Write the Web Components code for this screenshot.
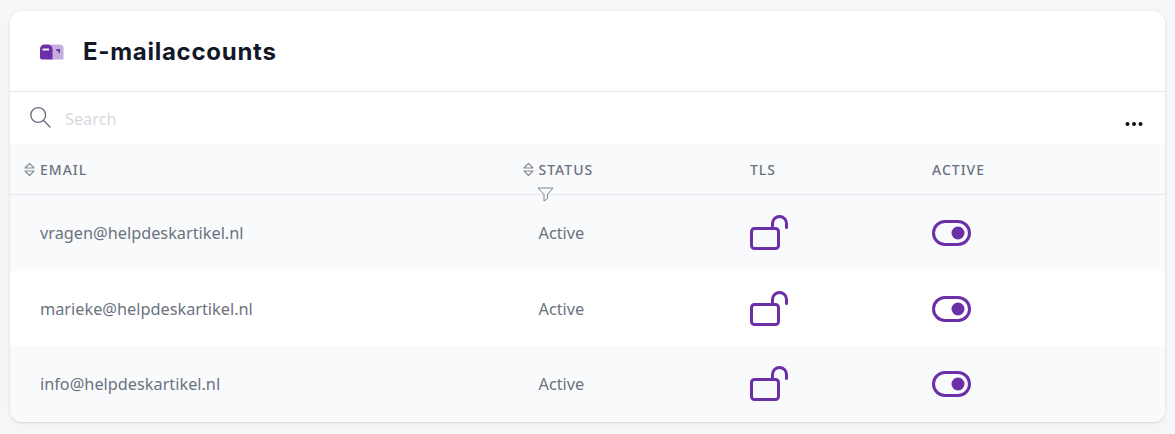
<!DOCTYPE html>
<html>
<head>
<meta charset="utf-8">
<title>E-mailaccounts</title>
<style>
    html, body { margin: 0; background: #f5f6f8; }
    body { padding: 11px 10px 12px; font-family: "Noto Sans", sans-serif; }
</style>
</head>
<body>
<account-card heading="E-mailaccounts">
    <account-head slot="head"></account-head>
    <account-row email="vragen@helpdeskartikel.nl" status="Active" shade style="height:76px"></account-row>
    <account-row email="marieke@helpdeskartikel.nl" status="Active" style="height:75px"></account-row>
    <account-row email="info@helpdeskartikel.nl" status="Active" shade style="height:76px"></account-row>
</account-card>

<script>
class AccountCard extends HTMLElement {
    constructor() {
        super();
        const shadowRoot = this.attachShadow({ mode: 'open' });
        shadowRoot.innerHTML = `
        <style>
            :host {
                display: block;
                background: #fff;
                border-radius: 12px;
                box-shadow: 0 1px 3px rgba(0,0,0,0.14);
                overflow: hidden;
            }
            #title {
                display: flex;
                align-items: center;
                gap: 19px;
                height: 80px;
                padding-left: 30px;
                border-bottom: 1px solid #e5e7eb;
            }
            #mailbox { margin-top: 1px; }
            h1 {
                margin: 2px 0 0;
                font: 700 24px/32px Inter, sans-serif;
                letter-spacing: 0.72px;
                color: #111827;
            }
            #search {
                display: flex;
                align-items: center;
                height: 52px;
                padding: 0 22px 0 19px;
                gap: 14px;
            }
            #search span {
                flex: 1;
                margin-top: 1px;
                font-size: 16.3px;
                color: #d6d9e0;
            }
            #dots { margin-top: 11px; }
            svg { display: block; }
        </style>
        <div id="title">
            <svg id="mailbox" width="24" height="16" viewBox="0 0 24 16">
                <path d="M11 0.5H19.5A4 4 0 0 1 23.5 4.5V15.5H11Z" fill="#c4aee0"/>
                <path d="M4.5 0.5H8A4.5 4.5 0 0 1 12.5 5V15.5H2A2 2 0 0 1 0 13.5V5A4.5 4.5 0 0 1 4.5 0.5Z" fill="#6b2fa8"/>
                <rect x="2.5" y="4.5" width="6.5" height="2" fill="#efe8f7"/>
                <path d="M16.5 5H20V9H18.5V7H16.5Z" fill="#6b2fa8"/>
            </svg>
            <h1></h1>
        </div>
        <div id="search">
            <svg width="22" height="22" viewBox="0 0 22 22" fill="none" stroke="#6b7280" stroke-width="1.4" stroke-linecap="round" style="overflow:visible">
                <circle cx="9.2" cy="8" r="7.4"/>
                <path d="M14.6 13.4L21 20"/>
            </svg>
            <span>Search</span>
            <svg id="dots" width="18" height="4" viewBox="0 0 18 4" fill="#111"><circle cx="2.5" cy="2" r="2"/><circle cx="9" cy="2" r="2"/><circle cx="15.5" cy="2" r="2"/></svg>
        </div>
        <slot name="head"></slot>
        <slot></slot>
        `;
        shadowRoot.querySelector('h1').textContent = this.getAttribute('heading');
    }
}

class AccountHead extends HTMLElement {
    constructor() {
        super();
        const sort = `<svg class="sort" width="11" height="15" viewBox="0 0 11 15" fill="none" stroke="#858b97" stroke-width="1.2" stroke-linejoin="round"><path d="M1 6L5.5 1.5L10 6Z"/><path d="M1 9L5.5 13.5L10 9Z"/></svg>`;
        const shadowRoot = this.attachShadow({ mode: 'open' });
        shadowRoot.innerHTML = `
        <style>
            :host {
                display: grid;
                grid-template-columns: 498.5px 227.5px 182px 1fr;
                height: 50px;
                align-items: center;
                background: #f9fafb;
                border-bottom: 1px solid #e5e7eb;
                font-size: 14px;
                font-weight: 500;
                letter-spacing: 1px;
                color: #6b7280;
                padding-left: 14px;
                position: relative;
            }
            div { display: flex; align-items: center; gap: 5px; }
            .filter { position: absolute; left: 527px; top: 43px; }
        </style>
        <div>${sort}<span>EMAIL</span></div>
        <div>${sort}<span>STATUS</span></div>
        <div><span>TLS</span></div>
        <div><span>ACTIVE</span></div>
        <svg class="filter" width="17" height="15" viewBox="0 0 17 15" fill="none" stroke="#7b818d" stroke-width="1" stroke-linejoin="round"><path d="M1 1H16L10.5 7.5V11.5L7 14V7.5Z"/></svg>
        `;
    }
}

class AccountRow extends HTMLElement {
    constructor() {
        super();
        const shadowRoot = this.attachShadow({ mode: 'open' });
        shadowRoot.innerHTML = `
        <style>
            :host {
                display: grid;
                height: 75.5px;
                align-items: center;
                padding-left: 30px;
                grid-template-columns: 498.5px 211.5px 182px 1fr;
                font-size: 16.3px;
                color: #6b7280;
                background: #fff;
            }
            :host([shade]) { background: #f9fafb; }
            svg { display: block; }
        </style>
        <span id="email"></span>
        <span id="status"></span>
        <svg width="38" height="36" viewBox="0 0 38 36" fill="none" stroke="#6b2fa8" stroke-width="3" stroke-linecap="round" stroke-linejoin="round">
            <rect x="1.5" y="13.5" width="27" height="20" rx="3"/>
            <path d="M22.5 13V8.5A7 7 0 0 1 36.5 8.5V12.5"/>
        </svg>
        <svg width="39" height="26" viewBox="0 0 39 26" fill="none" stroke="#6b2fa8" stroke-width="3">
            <rect x="1.5" y="1.5" width="36" height="23" rx="11.5"/>
            <circle cx="26" cy="13" r="6.5" fill="#6b2fa8" stroke="none"/>
        </svg>
        `;
        shadowRoot.querySelector('#email').textContent = this.getAttribute('email');
        shadowRoot.querySelector('#status').textContent = this.getAttribute('status');
    }
}

customElements.define('account-card', AccountCard);
customElements.define('account-head', AccountHead);
customElements.define('account-row', AccountRow);
</script>
</body>
</html>
